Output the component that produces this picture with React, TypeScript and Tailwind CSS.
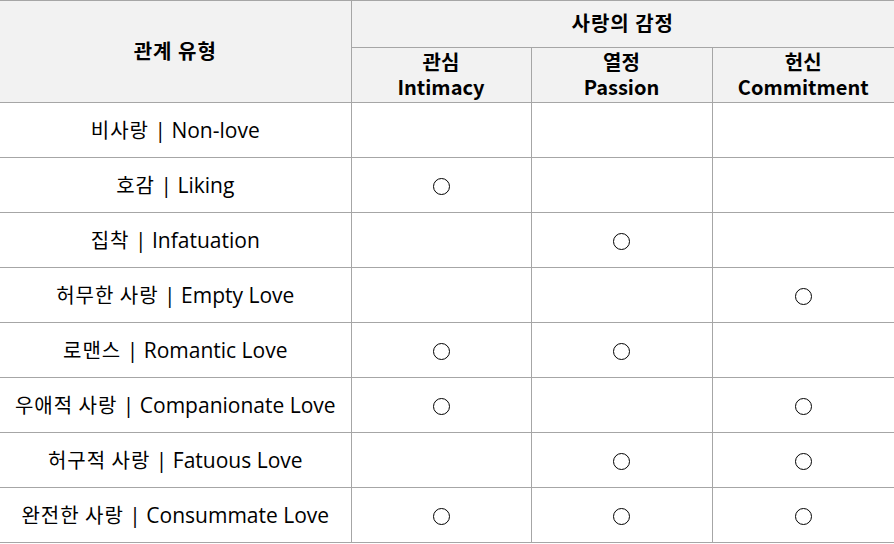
const rows: [string, string, boolean, boolean, boolean][] = [
  ['비사랑', 'Non-love', false, false, false],
  ['호감', 'Liking', true, false, false],
  ['집착', 'Infatuation', false, true, false],
  ['허무한 사랑', 'Empty Love', false, false, true],
  ['로맨스', 'Romantic Love', true, true, false],
  ['우애적 사랑', 'Companionate Love', true, false, true],
  ['허구적 사랑', 'Fatuous Love', false, true, true],
  ['완전한 사랑', 'Consummate Love', true, true, true],
];

function Mark({ on }: { on: boolean }) {
  if (!on) return null;
  return <span className="inline-block h-[17px] w-[17px] rounded-full border border-black align-middle" />;
}

export default function App() {
  return (
    <div className="h-[544px] w-[894px] overflow-hidden bg-white font-['Open_Sans','Noto_Sans_CJK_KR',sans-serif] text-[21px] text-black">
      <table className="w-[894px] table-fixed border-collapse">
        <colgroup>
          <col className="w-[351px]" />
          <col className="w-[180px]" />
          <col className="w-[181px]" />
          <col className="w-[182px]" />
        </colgroup>
        <thead className="bg-[#f2f2f2] font-['Noto_Sans_CJK_KR',sans-serif] text-[20px] font-bold">
          <tr className="h-[47px]">
            <th rowSpan={2} className="border-t border-b border-r border-[#a6a6a6] pb-[2px] text-center leading-none tracking-[1px]">
              관계 유형
            </th>
            <th colSpan={3} className="border-t border-b border-[#a6a6a6] pb-[3px] text-center leading-none tracking-[1px]">
              사랑의 감정
            </th>
          </tr>
          <tr className="h-[55px]">
            <th className="border-b border-r border-[#a6a6a6] pb-[3px] text-center leading-[25px]">
              관심
              <br />
              Intimacy
            </th>
            <th className="border-b border-r border-[#a6a6a6] pb-[3px] text-center leading-[25px]">
              열정
              <br />
              Passion
            </th>
            <th className="border-b border-[#a6a6a6] pb-[3px] text-center leading-[25px]">
              헌신
              <br />
              Commitment
            </th>
          </tr>
        </thead>
        <tbody>
          {rows.map(([ko, en, a, b, c]) => (
            <tr key={en} className="h-[55px]">
              <td className="border-b border-r border-[#a6a6a6] text-center leading-none">
                <span className="font-['Noto_Sans_CJK_KR',sans-serif] text-[20px] tracking-[1px]">{ko}</span> | {en}
              </td>
              <td className="border-b border-r border-[#a6a6a6] text-center leading-none">
                <Mark on={a} />
              </td>
              <td className="border-b border-r border-[#a6a6a6] text-center leading-none">
                <Mark on={b} />
              </td>
              <td className="border-b border-[#a6a6a6] text-center leading-none">
                <Mark on={c} />
              </td>
            </tr>
          ))}
        </tbody>
      </table>
    </div>
  );
}
